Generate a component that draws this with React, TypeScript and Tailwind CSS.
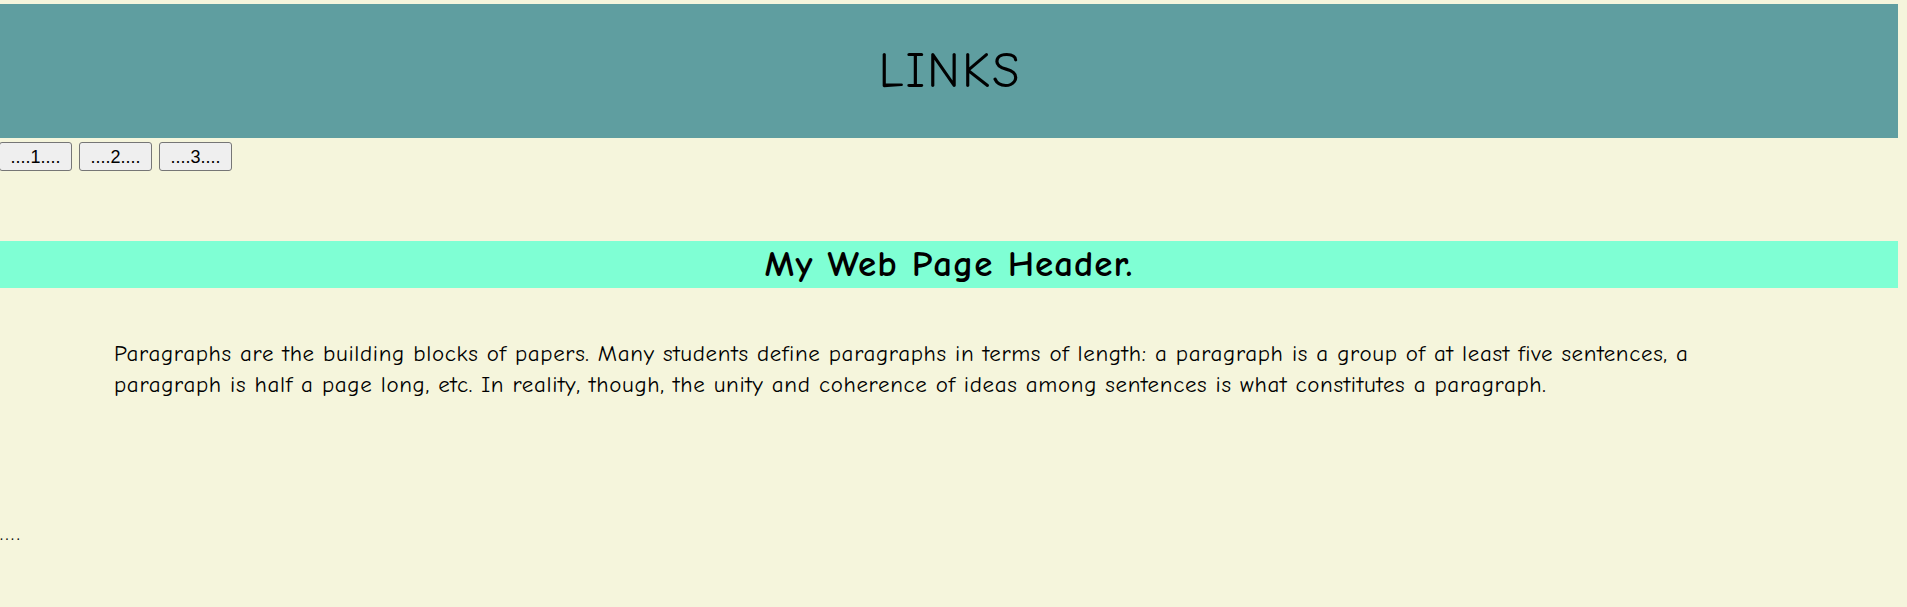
import React from "react";

const comic = { fontFamily: '"Comic Sans MS", "Comic Neue", "DejaVu Sans", sans-serif' };

export default function App() {
  return (
    <div className="min-h-[607px] w-full bg-[#f5f5dc] text-black overflow-hidden" style={comic}>
      <div className="w-[1898px] pt-[4px]">
        <div className="h-[134px] bg-[#5f9ea0] flex items-center justify-center">
          <h1 className="text-[50px] leading-none font-normal tracking-[2px] pl-[2px]">LINKS</h1>
        </div>
        <div className="flex gap-[7px] mt-[4px] -ml-px">
          {["....1....", "....2....", "....3...."].map((t) => (
            <button
              key={t}
              className="h-[29px] w-[73px] px-0 bg-[#efefef] border border-[#767676] rounded-[3px] text-[18px] leading-none text-black"
              style={{ fontFamily: '"Liberation Sans", Arial, sans-serif' }}
            >
              {t}
            </button>
          ))}
        </div>
        <h2 className="mt-[70px] h-[47px] bg-[#7fffd4] flex items-center justify-center font-bold text-[37px] leading-none tracking-[1px]">
          My Web Page Header.
        </h2>
        <p className="mt-[50px] mx-[114px] text-[23px] leading-[31px] tracking-[0.65px]">
          Paragraphs are the building blocks of papers. Many students define paragraphs in terms of length: a paragraph is a group of at least five sentences, a paragraph is half a page long, etc. In reality, though, the unity and coherence of ideas among sentences is what constitutes a paragraph.
        </p>
        <div className="mt-[123px] text-[20px] leading-[22px] tracking-[2.5px]">....</div>
      </div>
    </div>
  );
}
